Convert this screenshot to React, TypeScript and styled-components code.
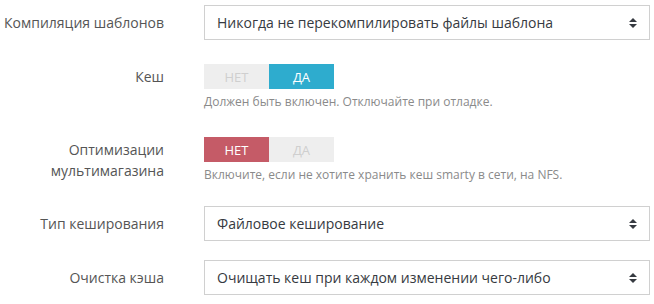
import React from "react";
import styled, { createGlobalStyle } from "styled-components";

const Global = createGlobalStyle`
  html, body { margin: 0; padding: 0; background: #fff; }
  body { font-family: "Open Sans", "Noto Sans", sans-serif; color: #555; }
`;

const Form = styled.div`
  padding-top: 5px;
  width: 654px;
  display: flex;
  flex-direction: column;
`;

const Row = styled.div<{ $mb: number }>`
  display: grid;
  grid-template-columns: 164px 446px;
  column-gap: 40px;
  align-items: start;
  margin-bottom: ${(p) => p.$mb}px;
`;

const Label = styled.div<{ $pt: number }>`
  text-align: right;
  font-size: 14px;
  line-height: 21px;
  color: #555;
  padding-top: ${(p) => p.$pt}px;
`;

const Control = styled.div`
  display: flex;
  flex-direction: column;
`;

const SelectBox = styled.div`
  box-sizing: border-box;
  height: 35px;
  border: 1px solid #d0d0d0;
  background: #fff;
  display: flex;
  align-items: center;
  justify-content: space-between;
  padding: 0 12px 0 12px;
  font-size: 14px;
  color: #363a41;
`;

const Arrows = styled.svg`
  width: 8px;
  height: 12px;
  flex: none;
`;

const Toggle = styled.div`
  display: flex;
  width: 130px;
  height: 25px;
`;

const ToggleOpt = styled.div<{ $active: boolean; $color: string }>`
  flex: 1;
  display: flex;
  align-items: center;
  justify-content: center;
  font-size: 13px;
  background: ${(p) => (p.$active ? p.$color : "#eeeeee")};
  color: ${(p) => (p.$active ? "#fff" : "#cfcfcf")};
`;

const Help = styled.div`
  margin-top: 4px;
  font-size: 12px;
  line-height: 18px;
  color: #8a8a8a;
`;

const SortIcon = () => (
  <Arrows viewBox="0 0 8 12">
    <path d="M0 5 L4 1 L8 5 Z" fill="#363a41" />
    <path d="M0 7 L4 11 L8 7 Z" fill="#363a41" />
  </Arrows>
);

const Select = ({ value }: { value: string }) => (
  <SelectBox>
    <span>{value}</span>
    <SortIcon />
  </SelectBox>
);

const Switch = ({ yes, color }: { yes: boolean; color: string }) => (
  <Toggle>
    <ToggleOpt $active={!yes} $color={color}>НЕТ</ToggleOpt>
    <ToggleOpt $active={yes} $color={color}>ДА</ToggleOpt>
  </Toggle>
);

export default function App() {
  return (
    <>
      <Global />
      <Form>
        <Row $mb={24}>
          <Label $pt={7}>Компиляция шаблонов</Label>
          <Control>
            <Select value="Никогда не перекомпилировать файлы шаблона" />
          </Control>
        </Row>
        <Row $mb={26}>
          <Label $pt={2}>Кеш</Label>
          <Control>
            <Switch yes={true} color="#2eacce" />
            <Help>Должен быть включен. Отключайте при отладке.</Help>
          </Control>
        </Row>
        <Row $mb={22}>
          <Label $pt={2}>
            Оптимизации
            <br />
            мультимагазина
          </Label>
          <Control>
            <Switch yes={false} color="#c55b67" />
            <Help>Включите, если не хотите хранить кеш smarty в сети, на NFS.</Help>
          </Control>
        </Row>
        <Row $mb={19}>
          <Label $pt={7}>Тип кеширования</Label>
          <Control>
            <Select value="Файловое кеширование" />
          </Control>
        </Row>
        <Row $mb={0}>
          <Label $pt={7}>Очистка кэша</Label>
          <Control>
            <Select value="Очищать кеш при каждом изменении чего-либо" />
          </Control>
        </Row>
      </Form>
    </>
  );
}
